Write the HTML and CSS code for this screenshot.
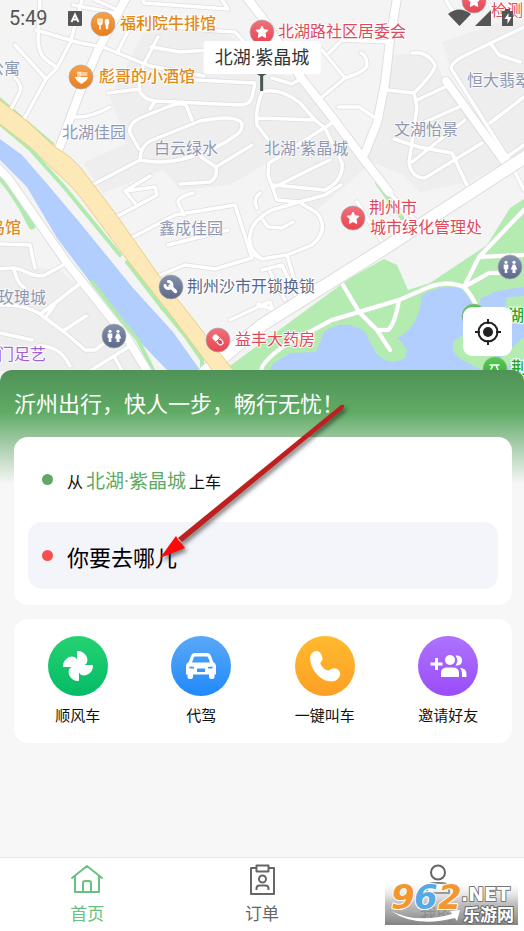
FILE: index.html
```html
<!DOCTYPE html>
<html lang="zh-CN">
<head>
<meta charset="utf-8">
<meta name="viewport" content="width=device-width, initial-scale=1">
<title>沂州出行</title>
<link rel="stylesheet" href="styles.css">
</head>
<body>
<div class="app">
  <section class="map" aria-label="地图">
    <svg class="map-canvas" viewBox="0 0 524 384" preserveAspectRatio="xMidYMin slice">
      <defs>
        <linearGradient id="mOrange" x2="0" y2="1"><stop stop-color="#f5a248"/><stop offset="1" stop-color="#ea7d1c"/></linearGradient>
        <linearGradient id="mRed" x2="0" y2="1"><stop stop-color="#f2707a"/><stop offset="1" stop-color="#e84450"/></linearGradient>
        <linearGradient id="mSlate" x2="0" y2="1"><stop stop-color="#8590ab"/><stop offset="1" stop-color="#5c6989"/></linearGradient>
        <linearGradient id="mGreen" x2="0" y2="1"><stop stop-color="#57cb52"/><stop offset="1" stop-color="#2fae2c"/></linearGradient>
        <path id="star" d="M0-6 1.800-2.200 6-1.800 3 1.200 3.700 5.500 0 3.500-3.700 5.500-3 1.200-6-1.800-1.800-2.200Z" fill="#fff" stroke="#fff" stroke-linejoin="round"/>
        <g id="people" fill="#fff"><circle cx="-4" cy="-4.700" r="1.600"/><circle cx="4" cy="-4.700" r="1.600"/><path d="M-6.300-2.400h4.600v4.400h-1v4h-2.600v-4h-1ZM2.800-2.400h2.400L7.300 2.400H5.500V6h-3V2.400H.700Z"/></g>
        <g id="minor">
          <path d="M40 0 38 40Q39 53 44 58L57 68M36 30 80 43 103 47 135 60 150 66 204 76M15 45 46 79M82 0 70 43 57 68 46 79 23 121M15 78Q22 84 20 92L11 109M73 5 115 13M95 0 118 10"/>
          <path d="M143 0 144 3 228 9 222 0M130 27 117 53M158 37 145 62Q137 80 140 92 145 100 155 101L240 105Q250 105 252 97L255 83M165 26 205 30 235 32 247 45M151 47 180 52 210 50M108 93 140 89M195 80 255 83M150 109 155 101"/>
          <path d="M75 117Q90 118 110 107M139 149 130 133Q128 124 140 118L170 106Q184 101 187 107L192 120M92 185 140 160Q140 147 150 141L200 121Q235 114 242 123 243 131 235 136 215 150 190 157 165 165 140 160M201 157 216 167Q218 178 210 182L180 184M216 167 252 145"/>
          <path d="M0 244 30 245 35 268M-2 269 13 268C24 268 32 279 45 275L65 264M14 270Q18 285 25 288M82 282 42 313M0 305Q30 304 45 318L63 331 85 350H95L115 335M63 331 86 316M0 333 32 340M38 346Q60 345 70 366M90 371 130 346M115 358 122 371M45 318 54 306"/>
          <path d="M116 217 157 195 155 187 125 191 135 203M125 191 150 176M133 237 175 215 235 205 252 258 215 269 185 265 160 275M184 215 178 202Q178 197 193 193M168 245 228 230"/>
          <path d="M412 53Q428 51 435 65 435 72 414 93L417 107 409 163Q412 178 425 178L482 143M387 90 414 93M417 100 445 87M394 139 419 147 452 153 469 190M425 122 459 107M412 162 465 120M338 107 359 107 374 117M322 50 345 78Q365 72 367 65 367 56 361 53M345 78 322 97M329 53 342 40 389 42M446 0 452 10M452 70 510 162M452 70Q448 65 462 57L524 27M490 43 499 55 520 62M490 123 524 97"/>
          <path d="M262 92Q280 87 300 103L315 120 325 128 342 163Q344 180 325 190L274 185M262 92Q255 110 257 125L270 142M258 118 315 120M332 123 269 163 268 175 277 200 299 202 325 195 341 185M275 187 315 167 330 160M272 78 292 84 302 78"/>
          <path d="M299 202 317 213Q330 230 312 245L287 255 262 259Q248 250 250 235 252 220 272 210L299 202M254 255 262 259M260 193Q252 200 257 208M268 227 282 228 293 222M263 220 268 227M287 255 295 282 305 300M262 305 270 302 276 319M262 270 282 265 300 305M230 320 262 305M258 304 282 313M270 272 285 300M357 202 384 245M382 185 415 220M508 158 524 190M468 185 472 193M508 156 524 145"/>
        </g>
        <g id="park">
          <path d="M343 285 359 312 377 330 390 350M262 371Q258 365 285 345L332 320 359 312 399 300 429 287Q448 280 464 287 472 295 477 308M399 300Q395 324 388 330H377M464 287 479 257 524 210M479 257 524 255M464 287 489 273 505 273"/>
        </g>
        <g id="major">
          <path d="M126-2 98 50 80 92 57 154M397-2 390 40 385 83 377 123 365 153M242-8 262 17 299 75 332 117 362 157 389 192M446 81 507 165"/>
          <path d="M-3 167 8 178 67 263 87 288 127 338 149 374"/>
        </g>
      </defs>
      <rect width="524" height="384" fill="#f4f4f4"/>
      <g fill="#eee">
        <path d="M110 97 143 33 213 27 243 43 267 73 300 77 333 127 367 167 317 210 280 198 267 163 230 185 180 190 163 170 103 193 83 163 127 143Z"/>
        <path d="M390 55 420 53 438 66 446 86 500 165 470 182 420 192 402 174 366 160 380 120Z"/>
        <path d="M442 42 500 22 524 20V150L507 162 452 72ZM0 244 30 245 35 268 60 270 88 295 128 342 145 371H0Z"/>
      </g>
      <path fill="#b4ebb0" d="M384 259 397 265 408 290 430 283 487 245 510 208 524 199V384H205L275 333 350 278Z"/>
      <path fill="#b1ceff" d="M262 384 273 364 290 353 316 352 324 332Q345 317 365 332L376 353Q388 367 405 358L407 350 398 338Q415 328 420 308L422 295Q444 283 462 289L470 300 477 312 481 298 497 291 524 287V296L507 297 505 307 524 312V384H490L470 362 457 355Q450 345 455 337L462 334 465 346 475 358 511 362 524 345V384Z"/>
      <path fill="#b4ebb0" d="M455 340 465 334 475 350 500 358 524 337V362L486 372 462 360Q448 350 455 340Z"/>
      <path fill="#b1ceff" d="M0 139 22 155 48 185 80 223 133 288 173 332 200 370 210 384H179L167 370 140 342 100 295 57 238 27 187 0 160Z"/>
      <g fill="none" stroke="#b0eaae" stroke-linecap="round">
        <path stroke-width="4" d="M-2 98 52 144M-2 122 30 149 65 188 120 255M127 262 160 305 187 338 202 360V370M92 282 120 318 138 340 154 372M377 183 402 218"/>
        <path stroke-width="7" d="M0 176 11 190 22 207 32 226"/>
      </g>
      <g fill="none" stroke-linejoin="round" stroke-linecap="round">
        <g stroke="#dedee1"><use href="#minor" stroke-width="5"/><use href="#major" stroke-width="10"/></g>
        <g stroke="#fff"><use href="#minor" stroke-width="3.500"/><use href="#major" stroke-width="8"/></g>
        <use href="#park" stroke="#d5e2d5" stroke-width="5"/>
        <use href="#park" stroke="#fff" stroke-width="4"/>
        <path stroke="#dedee1" stroke-width="14" d="M205 372 262 325 385 248 530 154"/>
        <path stroke="#fff" stroke-width="12" d="M205 372 262 325 385 248 530 154"/>
      </g>
      <path fill="#fde9b8" stroke="#edcc86" d="M-3 98 28 122 55 147Q74 158 84 172L115 213 160 277 233 370 243 384H220L210 367 167 310 125 257 90 210Q75 188 57 173L30 147-3 122Z"/>

      <g stroke="#a9a9ad" stroke-opacity=".7" stroke-width="1">
        <circle cx="103" cy="24" r="12" fill="url(#mOrange)"/>
        <circle cx="81" cy="77" r="12" fill="url(#mOrange)"/>
        <circle cx="262" cy="32" r="12" fill="url(#mRed)"/>
        <circle cx="474" cy="1" r="12" fill="url(#mRed)"/>
        <circle cx="353" cy="218" r="12" fill="url(#mRed)"/>
        <circle cx="218" cy="340" r="12" fill="url(#mRed)"/>
        <circle cx="171" cy="287" r="12" fill="url(#mSlate)"/>
        <circle cx="114" cy="336" r="12" fill="url(#mSlate)"/>
        <circle cx="510" cy="267" r="12" fill="url(#mSlate)"/>
        <circle cx="474" cy="316" r="12" fill="url(#mGreen)"/>
        <circle cx="495" cy="369" r="12" fill="url(#mGreen)"/>
      </g>
      <g fill="none" stroke="#fff" stroke-width="1.500" stroke-linecap="round">
        <path d="M98 19v3q0 2.500 2 2.500t2-2.500v-3M100 19v10"/><path stroke-width="2.500" d="M107 24v4"/><ellipse cx="107" cy="22" rx="1.500" ry="2.500" fill="#fff"/>
        <path fill="#fff" stroke-width="1" d="M75.500 77.500h12q-1 3.500-4 4.500l-2 1.500-2-1.500q-3-1-4-4.500Z"/><path stroke-width="1" d="M78 77v-5M80 77v-5M78 73h9M80 75h7"/>
        <path d="m170 286 5.500 5.500" stroke-width="3.500"/><path d="M168.500 281.500a3.500 3.500 0 1 1-3.500 4" stroke-width="3"/>
        <path d="m215.500 337.500 5 5" stroke-width="6"/><path d="m220 338-4 4" stroke="#e84450" stroke-width="1"/><path d="m219.500 341.500 1 1" stroke="#e84450" stroke-width="3.500"/>
        <path d="M490 365h9M493 365l-2 4M496 365l2 5"/>
      </g>
      <use href="#star" x="262" y="32"/><use href="#star" x="474" y="1"/><use href="#star" x="353" y="218"/>
      <use href="#people" x="114" y="336"/><use href="#people" x="510" y="267"/>

      <g class="label food">
        <text x="120" y="29">福利院牛排馆</text>
        <text x="99" y="82">彪哥的小酒馆</text>
        <text x="-11" y="233">鸟馆</text>
      </g>
      <g class="label civic">
        <text x="278" y="37">北湖路社区居委会</text>
        <text x="491" y="16">检测</text>
        <text x="369" y="213">荆州市</text>
        <text x="370" y="233">城市绿化管理处</text>
        <text x="235" y="345">益丰大药房</text>
      </g>
      <g class="label area">
        <text x="-12" y="74">公寓</text>
        <text x="62" y="138">北湖佳园</text>
        <text x="154" y="154">白云绿水</text>
        <text x="264" y="154">北湖·紫晶城</text>
        <text x="394" y="135">文湖怡景</text>
        <text x="467" y="86">恒大翡翠</text>
        <text x="159" y="234">鑫成佳园</text>
        <text x="-2" y="303">玫瑰城</text>
      </g>
      <g class="label service"><text x="187" y="292">荆州沙市开锁换锁</text></g>
      <g class="label leisure"><text x="-2" y="360">门足艺</text></g>
      <g class="label scenic"><text x="508" y="321">湖</text><text x="511" y="373">荆</text></g>
    </svg>

    <header class="status">
      <time>5:49</time>
      <svg width="14" height="15" viewBox="0 0 14 15"><rect width="14" height="15" rx="1" fill="#555"/><path d="M3.500 11 7 3.500l3.500 7.500M5 8.500h4" fill="none" stroke="#fff" stroke-width="1.800"/></svg>
      <svg class="status-right" width="66" height="18" viewBox="0 0 66 18"><g fill="#555"><path d="M0 5Q11-4 23 5L11.500 17ZM27 17 43 1v16ZM54 2h3V0h5v2h3v15H54Z"/></g><path d="m60.500 4-4 6h3v5l4-7h-3Z" fill="#fff"/></svg>
    </header>

    <div class="pickup-pin">
      <span class="pickup-name">北湖·紫晶城</span>
      <svg width="12" height="17" viewBox="0 0 12 17"><path fill="#47584f" d="M1 0h10L7.500 2V17h-3V2Z"/></svg>
    </div>

    <button class="locate" type="button" aria-label="定位">
      <svg width="28" height="28" viewBox="0 0 28 28" fill="none" stroke="#222" stroke-width="2"><circle cx="14" cy="14" r="9.500"/><circle cx="14" cy="14" r="5" fill="#222" stroke="none"/><path d="M14 1v5M14 22v5M1 14h5M22 14h5"/></svg>
    </button>
  </section>

  <main class="sheet">
    <h1>沂州出行，快人一步，畅行无忧！</h1>
    <section class="card trip">
      <button class="row from" type="button"><i class="dot"></i><span>从<b>北湖·紫晶城</b>上车</span></button>
      <button class="row to" type="button"><i class="dot"></i><span>你要去哪儿</span></button>
    </section>
    <nav class="card services" aria-label="服务">
      <a href="#ride"><span class="disc green">
        <svg width="32" height="32" viewBox="0 0 32 32" fill="#fff"><g id="blade"><path d="M15 1.500Q15 1 16 1 21 1 24 5.500 26.500 9.500 24.500 13.500L16 19 10 11.500Q15 10.500 15 8Z"/></g><use href="#blade" transform="rotate(90 16 16)"/><use href="#blade" transform="rotate(180 16 16)"/><use href="#blade" transform="rotate(270 16 16)"/></svg>
      </span>顺风车</a>
      <a href="#driver"><span class="disc blue">
        <svg width="32" height="32" viewBox="0 0 32 32"><path fill="#fff" fill-rule="evenodd" d="M9.500 3h13q2.500 0 3.300 2.500L28.300 12Q31 13.500 31 16v8.500h-1.500V27q0 2-2 2h-1.500q-2 0-2-2v-2.500H8V27q0 2-2 2H4.500q-2 0-2-2v-2.500H1V16q0-2.500 2.700-4L6.200 5.500Q7 3 9.500 3ZM10 6.500q-.9 0-1.200.9L7 12.500h18l-1.800-5.100q-.3-.9-1.200-.9ZM4.500 16.500v2H9V17ZM27.500 16.500v2H23V17ZM12 18.500v3.500h8v-3.500Z"/></svg>
      </span>代驾</a>
      <a href="#call"><span class="disc amber">
        <svg width="32" height="32" viewBox="0 0 32 32" fill="#fff"><path d="M3 3Q7-.5 11 2.500 14 5.500 13.500 9.500 13 11 11.500 12.500 11 15 15 18.500 18.500 21.500 20.500 20 23 17.500 27 18.500 32 20.500 31 25.500 29 31 23 31.500 14 31.500 7.500 24 1.500 17 1 8 1 5 3 3Z"/></svg>
      </span>一键叫车</a>
      <a href="#invite"><span class="disc purple">
        <svg width="38" height="32" viewBox="0 0 38 32" fill="#fff"><path d="M6 8h3v4.500h4.500v3H9V20H6v-4.500H1.500v-3H6Z"/><circle cx="21" cy="10" r="5"/><path d="M12 27v-4q0-5.500 6-5.500h6q6 0 6 5.500v4ZM26.500 5.500q6.500-.5 6.500 5t-6.500 5q3.500-5 0-10ZM31 18q6.500 0 6.500 6v3H33v-4q0-3-2-5Z"/></svg>
      </span>邀请好友</a>
    </nav>
    <svg class="pointer" width="200" height="170" viewBox="0 0 200 170" aria-hidden="true"><path fill="#c01f20" d="M189 5Q194 4 191 9L30 142 26 138Z"/><path fill="#fe0808" d="M8 158 24 136 27 141 30 144 33 148Z"/></svg>
  </main>

  <nav class="tabs" aria-label="主导航">
    <a class="active" href="#home">
      <svg width="34" height="32" viewBox="0 0 34 32" fill="none" stroke="currentColor" stroke-width="2" stroke-linejoin="round" stroke-linecap="round"><path d="M2 14 17 2l15 12M5 12v16h24V12M13 28V19q0-2 2-2h4q2 0 2 2v9"/></svg>
      首页</a>
    <a href="#orders">
      <svg width="34" height="32" viewBox="0 0 34 32" fill="none" stroke="currentColor" stroke-width="2" stroke-linejoin="round"><path d="M11 4H6v26h23V4h-5M11.500 1.500h12v6h-12Z"/><circle cx="17.500" cy="15" r="3.500"/><path d="M11.500 26v-1.500q0-3 3-3h6q3 0 3 3V26"/></svg>
      订单</a>
    <a href="#me">
      <svg width="34" height="32" viewBox="0 0 34 32" fill="none" stroke="currentColor" stroke-width="2"><circle cx="18" cy="8.500" r="7"/><path d="M7 29v-3q0-7 7-7h8q7 0 7 7v3Z"/></svg>
      我的</a>
  </nav>

  <svg class="brand" width="133" height="43" viewBox="0 0 133 43" role="img" aria-label="962.NET 乐游网">
    <defs><linearGradient id="bg" x2="0" y2="1"><stop stop-color="#fff" stop-opacity=".2"/><stop offset=".5" stop-color="#aaa" stop-opacity=".75"/><stop offset="1" stop-color="#7c7c7c" stop-opacity=".95"/></linearGradient></defs>
    <rect width="133" height="43" fill="url(#bg)"/>
    <g class="brand-num"><text x="6" y="27" fill="#f4962f">9</text><text x="29" y="27" fill="#55a9e4">6</text><text x="53" y="27" fill="#f4962f">2</text></g>
    <path d="M6 29Q32 42 67 32l-2-3 10-1-3 11-2-3Q30 46 6 29Z" fill="#fff"/>
    <text class="brand-net" x="76" y="19">.NET</text>
    <text class="brand-cn" x="78" y="39">乐游网</text>
  </svg>
</div>
</body>
</html>
```
FILE: styles.css
```css
* { box-sizing: border-box; }

body {
  margin: 0;
  background: #f7f7f7;
  color: #111;
  font-family: Roboto, "Noto Sans CJK SC", sans-serif;
}

button {
  border: 0;
  padding: 0;
  background: none;
  color: inherit;
  font: inherit;
  text-align: left;
}

a { color: inherit; text-decoration: none; }

.app {
  position: relative;
  display: flex;
  flex-direction: column;
  min-height: 100vh;
}

/* Map */
.map { position: relative; height: 384px; overflow: hidden; }
.map-canvas { display: block; width: 100%; height: 100%; }

.label {
  font-size: 16px;
  stroke: #fff;
  stroke-width: 2px;
  stroke-linejoin: round;
  paint-order: stroke;
}
.food { fill: #e08a17; font-weight: 500; }
.civic { fill: #df4a5a; }
.area { fill: #8f98b3; stroke-opacity: .6; }
.service { fill: #596789; }
.leisure { fill: #a45fd0; }
.scenic { fill: #27a822; font-weight: 500; }

.status {
  position: absolute;
  inset: 0 0 auto;
  display: flex;
  align-items: center;
  gap: 20px;
  height: 36px;
  padding: 0 10px 0 9px;
  color: #555;
  font-size: 20px;
}
.status-right { margin-left: auto; }

.pickup-pin {
  position: absolute;
  top: 41px;
  left: 50%;
  display: flex;
  flex-direction: column;
  align-items: center;
  transform: translateX(-50%);
}
.pickup-name {
  padding: 0 11px;
  border-radius: 3px;
  background: #fff;
  color: #333;
  font-size: 18px;
  line-height: 33px;
  white-space: nowrap;
}

.locate {
  position: absolute;
  top: 307px;
  right: 12px;
  display: grid;
  place-items: center;
  width: 49px;
  height: 49px;
  border-radius: 9px;
  background: #fff;
}

/* Bottom sheet */
.sheet {
  position: relative;
  flex: 1;
  margin-top: -14px;
  padding: 3px 12px 24px 14px;
  border-radius: 12px 12px 0 0;
  background: linear-gradient(#4f9257 0, #5fab64 42px, #96c49a 67px, #f7f7f7 114px);
}

h1 {
  margin: 0;
  color: #fff;
  font-size: 22px;
  font-weight: 400;
  line-height: 64px;
}

.card { border-radius: 14px; background: #fff; }

.trip { padding: 0 14px 16px; }
.row {
  display: flex;
  align-items: center;
  gap: 14px;
  width: 100%;
  padding: 0 14px;
}
.from { height: 85px; font-size: 16px; }
.from b { margin: 0 3px; color: #5fa963; font-size: 19px; font-weight: 400; }
.to {
  height: 67px;
  border-radius: 14px;
  background: #f4f5fa;
  color: #000;
  font-size: 22px;
}
.dot { width: 11px; height: 11px; border-radius: 50%; background: #5fa963; }
.to .dot { background: #f94d50; }

.services {
  display: grid;
  grid-template-columns: repeat(4, 1fr);
  margin-top: 14px;
  padding: 17px 2px 15px;
}
.services a {
  display: flex;
  flex-direction: column;
  align-items: center;
  gap: 8px;
  font-size: 15px;
  line-height: 24px;
}
.disc {
  display: grid;
  place-items: center;
  width: 60px;
  height: 60px;
  border-radius: 50%;
}
.green { background: linear-gradient(#26d272, #03bb66); }
.blue { background: linear-gradient(#5aa8f8, #2089fb); }
.amber { background: linear-gradient(#ffba2e, #fc9f25); }
.purple { background: linear-gradient(#ad73fd, #9a4cf8); }

.pointer {
  position: absolute;
  top: 30px;
  left: 152px;
  pointer-events: none;
  filter: drop-shadow(2px 3px 2px rgb(0 0 0 / 50%));
}

/* Tab bar */
.tabs {
  display: grid;
  grid-template-columns: repeat(3, 1fr);
  height: 74px;
  border-top: 1px solid #e6e6e6;
  background: #fff;
  color: #666;
}
.tabs a {
  display: flex;
  flex-direction: column;
  align-items: center;
  gap: 6px;
  padding-top: 6px;
  font-size: 17px;
  line-height: 24px;
}
.tabs .active { color: #67c27f; }

.brand { position: absolute; right: 6px; bottom: 6px; pointer-events: none; }
.brand text {
  font-family: "DejaVu Sans", "Noto Sans CJK SC", sans-serif;
  font-weight: 700;
  stroke: #fff;
  stroke-linejoin: round;
  paint-order: stroke;
}
.brand .brand-num text { font-size: 34px; font-style: italic; stroke-width: 2px; }
.brand .brand-net { fill: #fff; font-size: 19px; stroke: #777; stroke-width: 2px; }
.brand .brand-cn { fill: #fff; font-size: 17px; stroke: #666; stroke-width: 2px; }
```
